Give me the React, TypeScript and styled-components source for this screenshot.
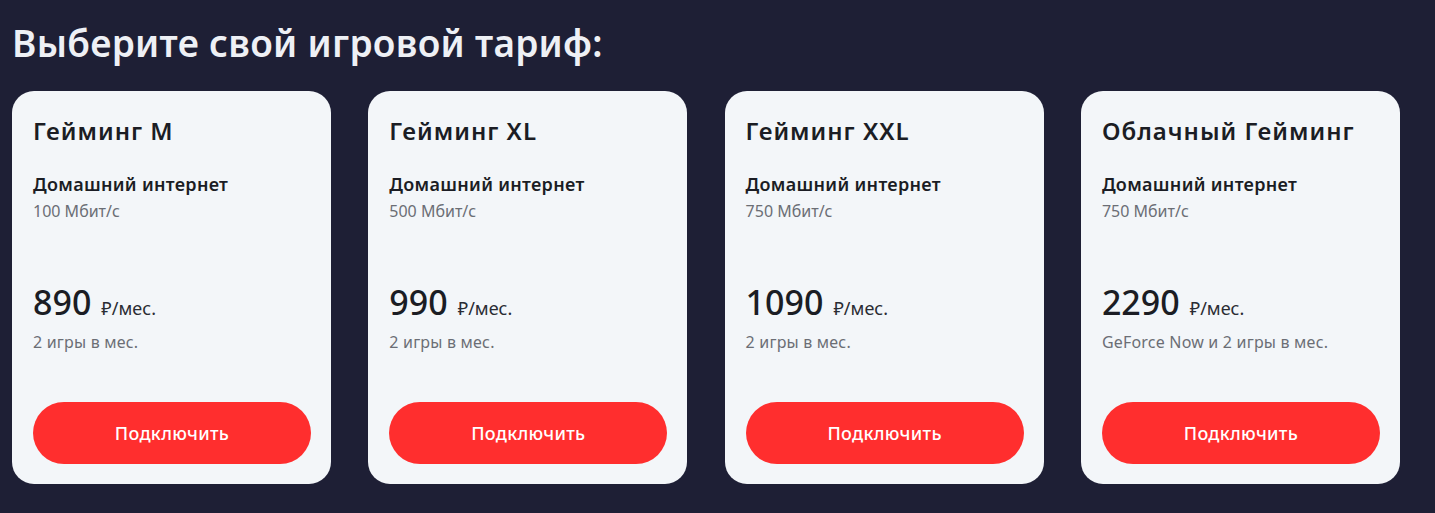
import styled, { createGlobalStyle } from 'styled-components';

const GlobalStyle = createGlobalStyle`
    html, body {
        margin: 0;
        padding: 0;
        background: #1e1f35;
    }
    body {
        font-family: "Noto Sans", "Open Sans", sans-serif;
    }
`

const Page = styled.div`
    min-height: 513px;
    box-sizing: border-box;
    padding: 21px 12px 0 12px;
    background: #1e1f35;
`

const Heading = styled.h1`
    margin: 0 0 26px 0;
    font-size: 37px;
    line-height: 44px;
    font-weight: 600;
    letter-spacing: 0.3px;
    color: #eef0f5;
`

const CardsGrid = styled.div`
    display: grid;
    grid-template-columns: repeat(4, 319px);
    column-gap: 37.3px;
`

const Card = styled.div`
    display: flex;
    flex-direction: column;
    box-sizing: border-box;
    height: 393px;
    padding: 24px 20px 20px 21px;
    background: #f3f6f9;
    border-radius: 22px;
`

const CardTitle = styled.h2`
    margin: 0 0 26px 0;
    font-size: 24px;
    line-height: 31px;
    font-weight: 600;
    letter-spacing: 1px;
    color: #1b1d24;
`

const ServiceName = styled.div`
    font-size: 18px;
    line-height: 24px;
    font-weight: 600;
    letter-spacing: 0.3px;
    color: #1b1d24;
    margin-bottom: 3px;
`

const ServiceValue = styled.div`
    font-size: 16px;
    line-height: 24px;
    color: #6b6e75;
`

const PriceRow = styled.div`
    display: flex;
    align-items: baseline;
    gap: 10px;
    margin-top: 59px;
    height: 40px;
`

const PriceValue = styled.span`
    font-size: 34px;
    line-height: 40px;
    font-weight: 500;
    color: #1b1d24;
`

const PriceUnit = styled.span`
    font-size: 18px;
    color: #2a2c33;
`

const PriceNote = styled.div`
    margin-top: 8px;
    font-size: 16px;
    line-height: 24px;
    letter-spacing: 0.2px;
    color: #6b6e75;
`

const ConnectButton = styled.button`
    margin-top: auto;
    height: 62px;
    width: 100%;
    border: none;
    border-radius: 31px;
    background: #ff2e2e;
    color: #ffffff;
    font-family: inherit;
    font-size: 18px;
    font-weight: 500;
    letter-spacing: 0.3px;
    cursor: pointer;
`

type Tariff = {
    name: string,
    speed: string,
    price: string,
    note: string
}

const tariffs: Tariff[] = [
    { name: 'Гейминг M', speed: '100 Мбит/с', price: '890', note: '2 игры в мес.' },
    { name: 'Гейминг XL', speed: '500 Мбит/с', price: '990', note: '2 игры в мес.' },
    { name: 'Гейминг XXL', speed: '750 Мбит/с', price: '1090', note: '2 игры в мес.' },
    { name: 'Облачный Гейминг', speed: '750 Мбит/с', price: '2290', note: 'GeForce Now и 2 игры в мес.' },
]

const App = () => {
    return (
        <>
            <GlobalStyle />
            <Page>
                <Heading>Выберите свой игровой тариф:</Heading>
                <CardsGrid>
                    {tariffs.map((tariff) => (
                        <Card key={tariff.name}>
                            <CardTitle>{tariff.name}</CardTitle>
                            <ServiceName>Домашний интернет</ServiceName>
                            <ServiceValue>{tariff.speed}</ServiceValue>
                            <PriceRow>
                                <PriceValue>{tariff.price}</PriceValue>
                                <PriceUnit>₽/мес.</PriceUnit>
                            </PriceRow>
                            <PriceNote>{tariff.note}</PriceNote>
                            <ConnectButton>Подключить</ConnectButton>
                        </Card>
                    ))}
                </CardsGrid>
            </Page>
        </>
    );
}

export default App;
